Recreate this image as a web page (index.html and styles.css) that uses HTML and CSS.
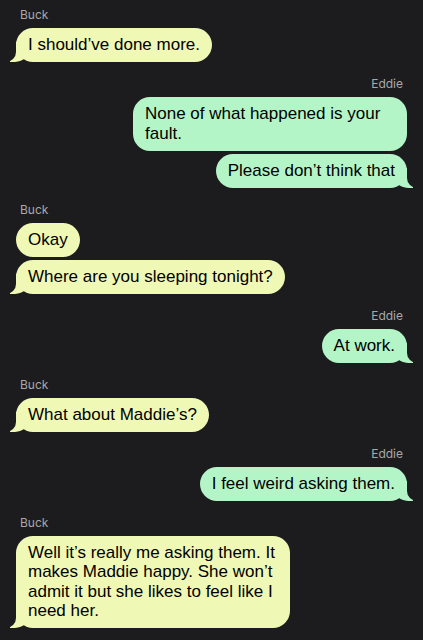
FILE: index.html
```html
<!DOCTYPE html>
<html lang="en">
<head>
<meta charset="utf-8">
<link rel="stylesheet" href="styles.css">
</head>
<body>
<div class="chat">
  <div class="group buck">
    <div class="name">Buck</div>
    <div class="bubble tail">I should’ve done more.</div>
  </div>
  <div class="group eddie">
    <div class="name">Eddie</div>
    <div class="bubble">None of what happened is your fault.</div>
    <div class="bubble tail">Please don’t think that</div>
  </div>
  <div class="group buck">
    <div class="name">Buck</div>
    <div class="bubble">Okay</div>
    <div class="bubble tail">Where are you sleeping tonight?</div>
  </div>
  <div class="group eddie">
    <div class="name">Eddie</div>
    <div class="bubble tail">At work.</div>
  </div>
  <div class="group buck">
    <div class="name">Buck</div>
    <div class="bubble tail">What about Maddie’s?</div>
  </div>
  <div class="group eddie">
    <div class="name">Eddie</div>
    <div class="bubble tail">I feel weird asking them.</div>
  </div>
  <div class="group buck">
    <div class="name">Buck</div>
    <div class="bubble tail">Well it’s really me asking them. It makes Maddie happy. She won’t admit it but she likes to feel like I need her.</div>
  </div>
</div>
</body>
</html>
```

FILE: styles.css
```css
html, body {
  margin: 0;
  padding: 0;
  background: #1c1c1e;
}
body {
  font-family: "Liberation Sans", Arial, sans-serif;
}
.chat {
  padding: 8px 16px 0 16px;
  display: flex;
  flex-direction: column;
}
.group {
  display: flex;
  flex-direction: column;
  gap: 3px;
  margin-top: 15px;
}
.group:first-child {
  margin-top: 0;
}
.buck { align-items: flex-start; }
.eddie { align-items: flex-end; }
.name {
  font-family: Inter, "Liberation Sans", sans-serif;
  font-size: 12px;
  line-height: 14px;
  color: #a8a8ab;
  margin: 0 4px 3px 4px;
}
.bubble {
  position: relative;
  z-index: 0;
  font-size: 17px;
  line-height: 19.5px;
  color: #000;
  padding: 7px 12px 7.5px 12px;
  border-radius: 17px;
  max-width: 250px;
}
.buck .bubble { background: #f0f8b6; }
.eddie .bubble { background: #b4f5c8; }

.bubble.tail::before,
.bubble.tail::after {
  content: "";
  position: absolute;
  z-index: -1;
  bottom: 0;
  height: 20px;
}
.buck .bubble.tail::before {
  left: -6px;
  width: 20px;
  background: #f0f8b6;
  border-bottom-right-radius: 15px;
}
.buck .bubble.tail::after {
  left: -10px;
  width: 10px;
  background: #1c1c1e;
  border-bottom-right-radius: 10px;
}
.eddie .bubble.tail::before {
  right: -6px;
  width: 20px;
  background: #b4f5c8;
  border-bottom-left-radius: 15px;
}
.eddie .bubble.tail::after {
  right: -10px;
  width: 10px;
  background: #1c1c1e;
  border-bottom-left-radius: 10px;
}
```
